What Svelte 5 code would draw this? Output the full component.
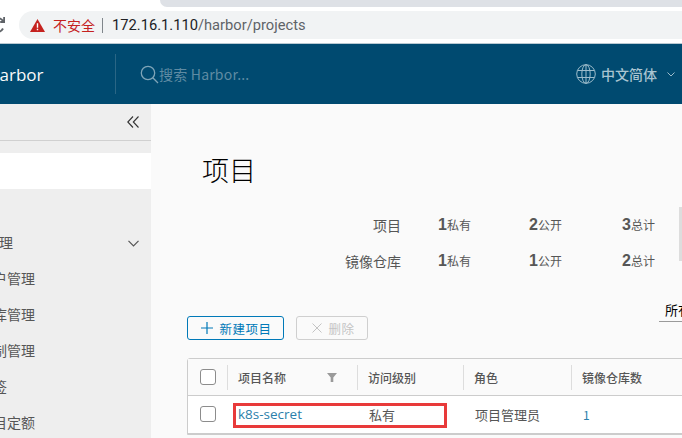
<script>
    const menu = ['户管理', '库管理', '制管理', '签', '目定额'];
    const stats = [
        { label: '项目', items: [[1, '私有'], [2, '公开'], [3, '总计']] },
        { label: '镜像仓库', items: [[1, '私有'], [1, '公开'], [2, '总计']] }
    ];
    const columns = ['访问级别', '角色', '镜像仓库数'];
</script>

<div class="page">
    <div class="chrome">
        <div class="tabstrip"><div class="tab"></div></div>
        <div class="toolbar">
            <svg class="reload" width="5" height="16" viewBox="0 0 5 16">
                <path d="M-5 1.500a6.500 6.500 0 0 1 8 2.500M4.200 0v5h-4M-5 14.500a6.500 6.500 0 0 0 8-3" fill="none" stroke="#5f6368" stroke-width="2"/>
            </svg>
            <div class="omnibox">
                <svg width="15" height="13" viewBox="0 0 15 13">
                    <path d="M7.500 0 15 13H0z" fill="#c5221f"/>
                    <path d="M6.800 4.200h1.400v4.600H6.800zM6.800 9.800h1.400v1.400H6.800z" fill="#fff"/>
                </svg>
                <span class="insecure">不安全</span>
                <span class="sep"></span>
                <span class="url"><b>172.16.1.110</b>/harbor/projects</span>
            </div>
        </div>
    </div>

    <header class="nav">
        <span class="brand">Harbor</span>
        <span class="nav-div"></span>
        <div class="search">
            <svg width="19" height="19" viewBox="0 0 19 19" fill="none" stroke="#7fa5b8" stroke-width="1.300">
                <circle cx="8" cy="8" r="6.700"/>
                <path d="M12.800 12.800 18 18"/>
            </svg>
            <span>搜索 Harbor...</span>
        </div>
        <div class="lang">
            <svg width="20" height="20" viewBox="0 0 20 20" fill="none" stroke="#9dbccb" stroke-width="1">
                <circle cx="10" cy="10" r="9.300"/>
                <ellipse cx="10" cy="10" rx="4.200" ry="9.300"/>
                <path d="M10 .7v18.600M1.500 6.500h17M1.500 13.500h17"/>
            </svg>
            <span>中文简体</span>
            <svg class="caret" width="8" height="5" viewBox="0 0 8 5" fill="none" stroke="#9dbccb" stroke-width="1">
                <path d="M.5.5 4 4 7.500.5"/>
            </svg>
        </div>
    </header>

    <div class="body">
        <aside class="side">
            <div class="collapse">
                <svg width="12" height="12" viewBox="0 0 12 12" fill="none" stroke="#333" stroke-width="1.100">
                    <path d="M6 .5.8 6 6 11.500M11.500.5 6.300 6l5.200 5.500"/>
                </svg>
            </div>
            <div class="active-row"></div>
            <div class="group">
                <span>理</span>
                <svg width="11" height="7" viewBox="0 0 11 7" fill="none" stroke="#555" stroke-width="1.200">
                    <path d="M.5.8 5.500 6l5-5.200"/>
                </svg>
            </div>
            {#each menu as item}
                <div class="item">{item}</div>
            {/each}
        </aside>

        <main class="main">
            <div class="scroll"></div>
            <h1>项目</h1>
            <div class="stats">
                {#each stats as row}
                    <div class="stat-row">
                        <span class="stat-label">{row.label}</span>
                        {#each row.items as [num, text]}
                            <span class="stat"><b>{num}</b>{text}</span>
                        {/each}
                    </div>
                {/each}
            </div>
            <div class="filter"><span>所有项目</span></div>
            <div class="actions">
                <button class="btn primary">
                    <svg width="12" height="12" viewBox="0 0 12 12" stroke="#0079b8" stroke-width="1.200">
                        <path d="M6 0v12M0 6h12"/>
                    </svg>
                    新建项目
                </button>
                <button class="btn off" disabled>
                    <svg width="10" height="10" viewBox="0 0 10 10" stroke="#c4c4c4" stroke-width="1">
                        <path d="M.5.5l9 9M9.500.5l-9 9"/>
                    </svg>
                    删除
                </button>
            </div>
            <div class="grid">
                <div class="grid-row head">
                    <div class="check"><span class="box"></span></div>
                    <div class="cell name">
                        项目名称
                        <svg width="10" height="9" viewBox="0 0 10 9"><path d="M0 0h10L6.300 4.500V9H3.700V4.500z" fill="#9a9a9a"/></svg>
                    </div>
                    {#each columns as col}
                        <div class="cell">{col}</div>
                    {/each}
                </div>
                <div class="grid-row data">
                    <div class="check"><span class="box"></span></div>
                    <div class="cell name link">k8s-secret</div>
                    <div class="cell">私有</div>
                    <div class="cell">项目管理员</div>
                    <div class="cell link num">1</div>
                </div>
                <div class="mark"></div>
            </div>
        </main>
    </div>
</div>

<style>
    :global(body) {
        margin: 0;
        background: #fff;
    }

    .page {
        width: 682px;
        height: 438px;
        overflow: hidden;
        display: flex;
        flex-direction: column;
        font-family: "Noto Sans CJK SC", "Open Sans", sans-serif;
        color: #565656;
    }

    .chrome {
        height: 44px;
        flex: none;
        background: #fff;
        border-bottom: 1px solid #b9c9d2;
        box-sizing: border-box;
    }

    .tabstrip {
        height: 7px;
        display: flex;
        justify-content: flex-end;
    }

    .tab {
        width: 522px;
        background: #dee1e6;
        border-bottom-left-radius: 8px;
    }

    .toolbar {
        display: flex;
        align-items: center;
        height: 28px;
        margin-top: 4px;
    }

    .reload {
        margin-right: 14px;
        flex: none;
    }

    .omnibox {
        flex: 1;
        height: 28px;
        background: #f1f3f4;
        border-radius: 14px 0 0 14px;
        display: flex;
        align-items: center;
        padding-left: 11px;
    }

    .insecure {
        color: #c5221f;
        font-size: 14px;
        margin-left: 8px;
    }

    .sep {
        width: 1px;
        height: 15px;
        background: #80868b;
        margin: 0 9px 0 7px;
    }

    .url {
        font: 14.700px "Roboto", sans-serif;
        color: #5f6368;
    }

    .url b {
        font-weight: 400;
        color: #202124;
    }

    .nav {
        height: 60px;
        flex: none;
        background: #004a70;
        display: flex;
        align-items: center;
        overflow: hidden;
    }

    .brand {
        font: 17px "Open Sans", sans-serif;
        color: #fafafa;
        margin-left: -13px;
        width: 128px;
        flex: none;
    }

    .nav-div {
        width: 1px;
        height: 40px;
        background: #2a6685;
        flex: none;
    }

    .search {
        display: flex;
        align-items: center;
        margin-left: 24px;
        color: #5f8ba3;
        font-size: 14px;
        letter-spacing: 0.200px;
    }

    .lang {
        margin-left: auto;
        margin-right: 7px;
        display: flex;
        align-items: center;
        color: #a9c4d1;
        font-size: 14px;
        font-weight: 500;
    }

    .lang span {
        margin: 0 10px 0 5px;
    }

    .body {
        flex: 1;
        display: flex;
        min-height: 0;
    }

    .side {
        width: 151px;
        flex: none;
        background: #eeeeee;
        font-size: 14px;
    }

    .collapse {
        height: 37px;
        border-bottom: 1px solid #d0d0d0;
        display: flex;
        align-items: center;
        justify-content: flex-end;
        padding-right: 12px;
        box-sizing: border-box;
        margin-bottom: 12px;
    }

    .active-row {
        height: 36px;
        background: #fff;
    }

    .group {
        margin-top: 35px;
        height: 36px;
        display: flex;
        align-items: center;
        justify-content: space-between;
        padding-right: 12px;
    }

    .group svg {
        margin-top: 2px;
    }

    .group span {
        margin-left: -1px;
    }

    .item {
        height: 36px;
        line-height: 36px;
        margin-left: -7px;
    }

    .main {
        flex: 1;
        min-width: 0;
        position: relative;
        background: #fafafa;
        padding-left: 36px;
    }

    .scroll {
        position: absolute;
        right: 0;
        top: 103px;
        width: 3px;
        height: 54px;
        background: #ddd;
    }

    h1 {
        font-size: 27px;
        font-weight: 300;
        color: #000;
        margin: 0;
        padding: 47px 0 0 15px;
        line-height: 38px;
    }

    .stats {
        margin-top: 18px;
    }

    .stat-row {
        display: grid;
        grid-template-columns: 214px 70px 91px 93px;
        height: 36px;
        align-items: center;
        font-size: 14px;
    }

    .stat-label {
        text-align: right;
    }

    .stat {
        text-align: right;
        font-size: 12px;
    }

    .stat b {
        font: 700 16px "Liberation Sans", sans-serif;
    }

    .filter {
        height: 21px;
        margin: 21px -40px 0 472px;
        padding-left: 6px;
        border-bottom: 1px solid #9a9a9a;
        font-size: 13px;
        color: #000;
        white-space: nowrap;
        overflow: hidden;
    }

    .actions {
        display: flex;
        gap: 12px;
        margin-top: -6px;
    }

    .btn {
        height: 24px;
        box-sizing: border-box;
        background: transparent;
        border-radius: 3px;
        font: 12.500px "Noto Sans CJK SC", sans-serif;
        letter-spacing: 0.500px;
        display: flex;
        align-items: center;
        justify-content: center;
        gap: 6px;
    }

    .primary {
        width: 97px;
        border: 1px solid #0079b8;
        color: #0079b8;
        padding: 0 0 0 2px;
    }

    .off {
        width: 72px;
        border: 1px solid #cfcfcf;
        color: #c4c4c4;
        padding: 0 0 0 3px;
    }

    .grid {
        position: relative;
        margin-top: 18px;
        width: 560px;
        border: 1px solid #ccc;
        border-radius: 3px 0 0 0;
        background: #fff;
    }

    .grid-row {
        display: grid;
        grid-template-columns: 39px 130px 106px 108px 177px;
        box-sizing: border-box;
        height: 38px;
        border-bottom: 1px solid #ccc;
        align-items: center;
        font-size: 13px;
    }

    .data {
        padding-bottom: 1px;
    }

    .head {
        height: 37px;
        background: #fafafa;
        font-size: 12px;
        font-weight: 500;
    }

    .check {
        display: flex;
        justify-content: center;
    }

    .box {
        width: 16px;
        height: 16px;
        box-sizing: border-box;
        border: 1px solid #8c8c8c;
        border-radius: 3px;
        background: #fff;
    }

    .cell {
        padding-left: 12px;
        display: flex;
        align-items: center;
        justify-content: space-between;
        height: 25px;
    }

    .head .cell {
        border-left: 1px solid #ddd;
        padding-left: 10px;
    }

    .name svg {
        margin-right: 20px;
    }

    .link {
        color: #2b7fab;
    }

    .name.link {
        font: 13.500px "Open Sans", sans-serif;
        padding-left: 11px;
    }

    .num {
        font-size: 12px;
    }

    .mark {
        position: absolute;
        left: 45px;
        top: 44px;
        width: 214px;
        height: 25px;
        box-sizing: border-box;
        border: 3px solid #e83a3a;
    }
</style>
